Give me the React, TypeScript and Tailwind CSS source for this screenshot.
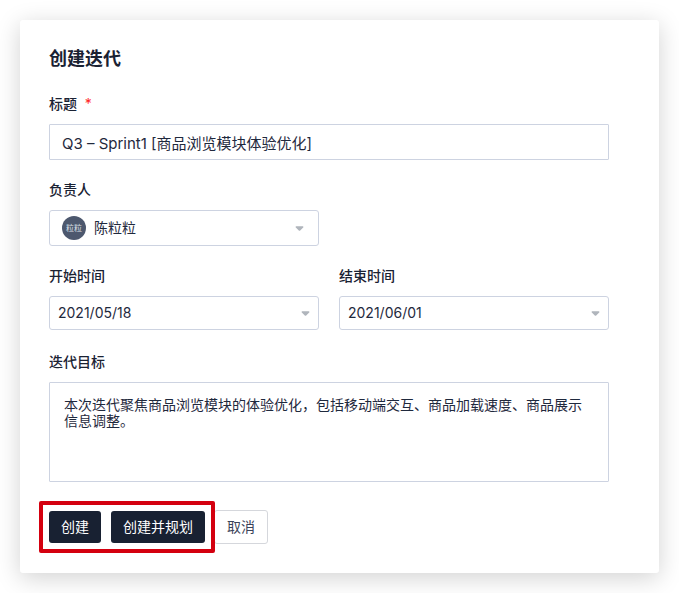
import React from "react";

interface Option {
    value: string;
    label: string;
}

interface SelectFieldProps {
    id: string;
    label: string;
    options: Option[];
    avatar?: string;
}

const owners: Option[] = [{ value: "chenlili", label: "陈粒粒" }];
const startDates: Option[] = [{ value: "2021-05-18", label: "2021/05/18" }];
const endDates: Option[] = [{ value: "2021-06-01", label: "2021/06/01" }];

const labelClass = "block text-sm leading-5 font-medium text-[#1a2233]";

function Caret() {
    return (
        <svg viewBox="0 0 9 5" className="h-[5px] w-[9px] shrink-0 fill-[#b0b5bc]" aria-hidden="true">
            <path d="M1.3.3h6.4c.7 0 1 .7.5 1.2L5.2 4.4a1 1 0 0 1-1.4 0L.8 1.5C.3 1 .6.3 1.3.3Z" />
        </svg>
    );
}

function SelectField({ id, label, options, avatar }: SelectFieldProps) {
    return (
        <div className="flex flex-col gap-2.5">
            <label htmlFor={id} className={labelClass}>
                {label}
            </label>
            {/* The select fills the frame, so the caret and avatar sit beside its text */}
            <div
                className={
                    avatar
                        ? "flex h-9 items-center gap-2 rounded-[3px] border border-[#cdd3e1] pr-3.5 pl-3"
                        : "flex h-[34px] items-center gap-2 rounded-[3px] border border-[#cdd3e1] px-2"
                }
            >
                {avatar && (
                    <span className="flex size-6 shrink-0 items-center justify-center rounded-full bg-[#4d586e] text-[8px] leading-none text-[#dfe2e8]">
                        {avatar}
                    </span>
                )}
                <select id={id} className="h-full min-w-0 flex-1 appearance-none bg-transparent text-sm outline-none">
                    {options.map((option) => (
                        <option key={option.value} value={option.value}>
                            {option.label}
                        </option>
                    ))}
                </select>
                <Caret />
            </div>
        </div>
    );
}

export default function App() {
    return (
        <main className="min-h-screen bg-white p-5 font-[Inter,'Noto_Sans_CJK_SC',sans-serif] text-[#1f293d]">
            <form
                className="rounded-[3px] bg-white py-[29px] pr-[50px] pl-[29px] shadow-[0_5px_24px_rgba(0,0,0,0.18)]"
                onSubmit={(e) => e.preventDefault()}
            >
                <h1 className="text-lg leading-5 font-semibold text-[#1a2233]">创建迭代</h1>

                <div className="mt-[25px] flex flex-col gap-2.5">
                    <label htmlFor="title" className={labelClass}>
                        标题 <span className="ml-1 font-normal text-[#ff2626]">*</span>
                    </label>
                    <input
                        id="title"
                        type="text"
                        required
                        defaultValue="Q3 – Sprint1 [商品浏览模块体验优化]"
                        className="h-9 w-full rounded-[1px] border border-[#cdd3e1] px-3 text-[15px] outline-none"
                    />
                </div>

                <div className="mt-5 grid grid-cols-2 gap-5">
                    <SelectField id="owner" label="负责人" options={owners} avatar="粒粒" />
                </div>

                <div className="mt-5 grid grid-cols-2 gap-5">
                    <SelectField id="start" label="开始时间" options={startDates} />
                    <SelectField id="end" label="结束时间" options={endDates} />
                </div>

                <div className="mt-[22px] flex flex-col gap-2.5">
                    <label htmlFor="goal" className={labelClass}>
                        迭代目标
                    </label>
                    <textarea
                        id="goal"
                        defaultValue="本次迭代聚焦商品浏览模块的体验优化，包括移动端交互、商品加载速度、商品展示信息调整。"
                        className="h-[100px] w-full resize-none rounded-[1px] border border-[#cdd3e1] px-3.5 py-3.5 text-sm leading-4 outline-none"
                    />
                </div>

                <div className="mt-7 flex items-center gap-[9px]">
                    <div className="relative z-10 flex gap-2.5">
                        <button type="submit" className="h-8 rounded-[3px] bg-[#182132] px-3 text-sm text-white">
                            创建
                        </button>
                        <button type="button" className="h-8 rounded-[3px] bg-[#182132] px-3 text-sm text-white">
                            创建并规划
                        </button>
                        {/* Red highlight frame around the two create actions */}
                        <div className="pointer-events-none absolute -inset-2.5 rounded-[2px] border-4 border-[#d4000f]" />
                    </div>
                    <button type="button" className="h-[34px] rounded-[3px] border border-[#d5d7dc] bg-white px-3 text-sm text-[#3b4459]">
                        取消
                    </button>
                </div>
            </form>
        </main>
    );
}
